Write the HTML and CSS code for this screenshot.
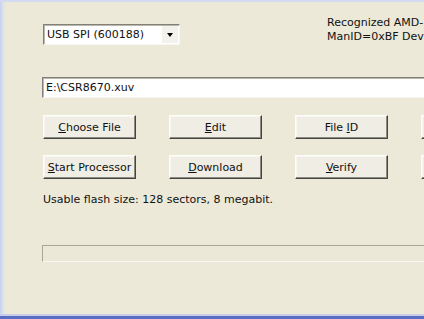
FILE: index.html
```html
<!DOCTYPE html>
<html>
<head>
    <link rel="stylesheet" href="styles.css">
</head>
<body>
    <div class="window">
        <div class="top-row">
            <div class="combo">
                <span class="combo-text">USB SPI (600188)</span>
                <span class="combo-button"><span class="combo-arrow"></span></span>
            </div>
            <div class="device-info">
                <div>Recognized AMD-</div>
                <div>ManID=0xBF Dev</div>
            </div>
        </div>

        <div class="file-field">E:\CSR8670.xuv</div>

        <div class="button-row">
            <button class="win-button"><u>C</u>hoose File</button>
            <button class="win-button"><u>E</u>dit</button>
            <button class="win-button">File <u>I</u>D</button>
            <button class="win-button"></button>
        </div>
        <div class="button-row second">
            <button class="win-button"><u>S</u>tart Processor</button>
            <button class="win-button"><u>D</u>ownload</button>
            <button class="win-button"><u>V</u>erify</button>
            <button class="win-button"></button>
        </div>

        <p class="status">Usable flash size: 128 sectors, 8 megabit.</p>

        <div class="progress"></div>
    </div>
</body>
</html>
```

FILE: styles.css
```css
body {
    margin: 0;
    background-color: #ece9d8;
    font-family: "DejaVu Sans", Verdana, sans-serif;
    font-size: 11px;
    color: #111;
}

.window {
    width: 424px;
    height: 319px;
    box-sizing: border-box;
    overflow: hidden;
    padding-left: 43px;
    background: linear-gradient(to right, #c2d2f4 0, #dfe2e6 3px, #ece9d8 6px);
    border-top: 2px solid #d3daf2;
    border-bottom: 3px solid #5a6ec6;
    box-shadow: inset 0 -2px #c9cde8;
    display: flex;
    flex-direction: column;
}

.top-row {
    display: flex;
    margin-top: 14px;
    height: 29px;
}

.combo {
    flex: none;
    width: 137px;
    height: 21px;
    margin-top: 8px;
    box-sizing: border-box;
    background: #fff;
    border: 1px solid;
    border-color: #828079 #f6f5f0 #f6f5f0 #828079;
    box-shadow: inset 1px 1px #b9b6aa;
    display: flex;
    align-items: center;
}

.combo-text {
    flex: 1;
    padding-left: 3px;
    white-space: nowrap;
}

.combo-button {
    width: 16px;
    height: 17px;
    margin-right: 1px;
    background: #f3f2ec;
    display: flex;
    align-items: center;
    justify-content: center;
}

.combo-arrow {
    width: 0;
    height: 0;
    border-left: 3px solid transparent;
    border-right: 3px solid transparent;
    border-top: 4px solid #000;
}

.device-info {
    flex: none;
    margin-left: 147px;
    line-height: 14px;
    white-space: nowrap;
}

.file-field {
    flex: none;
    margin-top: 32px;
    margin-left: -1px;
    width: 420px;
    height: 21px;
    box-sizing: border-box;
    background: #fff;
    border: 1px solid;
    border-color: #828079 #f6f5f0 #f6f5f0 #828079;
    box-shadow: inset 1px 1px #b9b6aa;
    padding-left: 3px;
    line-height: 19px;
    white-space: nowrap;
}

.button-row {
    display: flex;
    gap: 33px;
    margin-top: 17px;
}

.button-row.second {
    margin-top: 16px;
}

.win-button {
    flex: none;
    width: 93px;
    height: 24px;
    padding: 0;
    font-family: inherit;
    font-size: 11px;
    color: #111;
    background: #efede4;
    border: 1px solid;
    border-color: #fdfdfb #45443f #45443f #fdfdfb;
    box-shadow: inset -1px -1px #8e8b80, inset 1px 1px #f7f6f1;
    white-space: nowrap;
}

.win-button u {
    text-decoration-thickness: 1px;
    text-underline-offset: 1px;
}

.status {
    margin: 14px 0 0 0;
    line-height: 14px;
    white-space: nowrap;
}

.progress {
    flex: none;
    margin-top: 38px;
    margin-left: -1px;
    width: 420px;
    height: 17px;
    box-sizing: border-box;
    border: 1px solid;
    border-color: #a9a698 #f8f7f2 #f8f7f2 #a9a698;
    background: #ebe8d7;
}
```
